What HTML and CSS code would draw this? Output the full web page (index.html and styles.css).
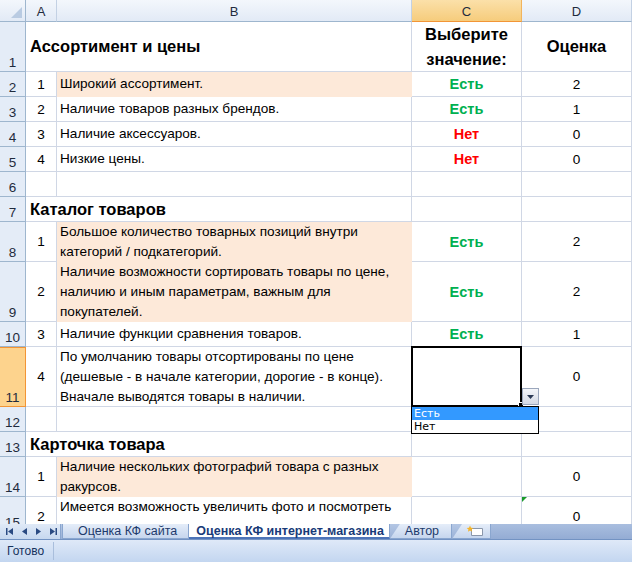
FILE: index.html
```html
<!DOCTYPE html>
<html lang="ru">
<head>
<meta charset="utf-8">
<title>Оценка КФ интернет-магазина</title>
<link rel="stylesheet" href="styles.css">
</head>
<body>
<div class="sheet">
  <div class="grid">
    <div class="ch corner"><span class="tri"></span></div>
    <div class="ch">A</div>
    <div class="ch">B</div>
    <div class="ch ch-sel">C</div>
    <div class="ch">D</div>

    <div class="rh">1</div>
    <div class="c title span2">Ассортимент и цены</div>
    <div class="c head">Выберите<br>значение:</div>
    <div class="c head">Оценка</div>

    <div class="rh">2</div>
    <div class="c num">1</div>
    <div class="c txt peach">Широкий ассортимент.</div>
    <div class="c val yes">Есть</div>
    <div class="c num">2</div>

    <div class="rh">3</div>
    <div class="c num">2</div>
    <div class="c txt">Наличие товаров разных брендов.</div>
    <div class="c val yes">Есть</div>
    <div class="c num">1</div>

    <div class="rh">4</div>
    <div class="c num">3</div>
    <div class="c txt">Наличие аксессуаров.</div>
    <div class="c val no">Нет</div>
    <div class="c num">0</div>

    <div class="rh">5</div>
    <div class="c num">4</div>
    <div class="c txt">Низкие цены.</div>
    <div class="c val no">Нет</div>
    <div class="c num">0</div>

    <div class="rh">6</div>
    <div class="c"></div>
    <div class="c"></div>
    <div class="c"></div>
    <div class="c"></div>

    <div class="rh">7</div>
    <div class="c title span2">Каталог товаров</div>
    <div class="c"></div>
    <div class="c"></div>

    <div class="rh">8</div>
    <div class="c num">1</div>
    <div class="c txt peach">Большое количество товарных позиций внутри<br>категорий / подкатегорий.</div>
    <div class="c val yes">Есть</div>
    <div class="c num">2</div>

    <div class="rh">9</div>
    <div class="c num">2</div>
    <div class="c txt peach">Наличие возможности сортировать товары по цене,<br>наличию и иным параметрам, важным для<br>покупателей.</div>
    <div class="c val yes">Есть</div>
    <div class="c num">2</div>

    <div class="rh">10</div>
    <div class="c num">3</div>
    <div class="c txt">Наличие функции сравнения товаров.</div>
    <div class="c val yes">Есть</div>
    <div class="c num">1</div>

    <div class="rh rh-sel">11</div>
    <div class="c num">4</div>
    <div class="c txt">По умолчанию товары отсортированы по цене<br>(дешевые - в начале категории, дорогие - в конце).<br>Вначале выводятся товары в наличии.</div>
    <div class="c active">
      <div class="selbox"></div>
      <div class="handle"></div>
      <div class="ddbtn"><svg width="7" height="4" viewBox="0 0 7 4"><path d="M0 0h7L3.5 4z" fill="#2b3a55"/></svg></div>
      <ul class="ddlist">
        <li class="hl">Есть</li>
        <li>Нет</li>
      </ul>
    </div>
    <div class="c num">0</div>

    <div class="rh">12</div>
    <div class="c"></div>
    <div class="c"></div>
    <div class="c"></div>
    <div class="c"></div>

    <div class="rh">13</div>
    <div class="c title span2">Карточка товара</div>
    <div class="c"></div>
    <div class="c"></div>

    <div class="rh">14</div>
    <div class="c num">1</div>
    <div class="c txt peach">Наличие нескольких фотографий товара с разных<br>ракурсов.</div>
    <div class="c"></div>
    <div class="c num">0</div>

    <div class="rh rh-last">15</div>
    <div class="c num">2</div>
    <div class="c txt top">Имеется возможность увеличить фото и посмотреть</div>
    <div class="c"></div>
    <div class="c num flag">0</div>
  </div>

  <div class="tabbar">
    <div class="nav">
      <svg width="9" height="9" viewBox="0 0 9 9"><path d="M1 1h1.5v7H1z M8 1v7L3 4.5z" fill="#2a4a82"/></svg>
      <svg width="7" height="9" viewBox="0 0 7 9"><path d="M6 1v7L1 4.5z" fill="#2a4a82"/></svg>
      <svg width="7" height="9" viewBox="0 0 7 9"><path d="M1 1v7l5-3.5z" fill="#2a4a82"/></svg>
      <svg width="9" height="9" viewBox="0 0 9 9"><path d="M1 1v7l5-3.5z M6.5 1H8v7H6.5z" fill="#2a4a82"/></svg>
    </div>
    <div class="tab tab-first">Оценка КФ сайта</div>
    <div class="tab tab-active">Оценка КФ интернет-магазина</div>
    <div class="tab">Автор</div>
    <div class="tab tab-new">
      <svg width="18" height="12" viewBox="0 0 18 12"><path d="M5.5 3.5h11v7h-11z" fill="#fff" stroke="#8a97ab"/><path d="M4 0.5l1 2.2 2.3 0.2-1.8 1.5 0.6 2.3-2.1-1.3-2.1 1.3 0.6-2.3L0.7 2.9 3 2.7z" fill="#f4b328"/></svg>
    </div>
    <div class="tabfill"></div>
  </div>

  <div class="status">
    <span class="ready">Готово</span>
  </div>
</div>
</body>
</html>
```

FILE: styles.css
```css
* { box-sizing: border-box; }

html, body {
  margin: 0;
  padding: 0;
  width: 632px;
  height: 562px;
  overflow: hidden;
  background: #fff;
  font-family: "Liberation Sans", Arial, sans-serif;
}

.sheet {
  width: 632px;
  height: 562px;
  display: flex;
  flex-direction: column;
}

.grid {
  height: 524px;
  overflow: hidden;
  display: grid;
  grid-template-columns: 26px 31px 355px 110px 110px;
  grid-template-rows: 22px 50px 25px 25px 25px 25px 25px 25px 40px 60px 25px 60px 25px 25px 40px 40px;
  flex: none;
}

/* column headers */
.ch {
  background: linear-gradient(#f3f7fc, #e2eaf6);
  border-right: 1px solid #c3d1e4;
  border-bottom: 1px solid #9eb6ce;
  display: flex;
  align-items: center;
  justify-content: center;
  font-size: 13px;
  color: #1f2b3d;
  padding-top: 1px;
}
.corner {
  position: relative;
  border-right-color: #9eb6ce;
}
.tri {
  position: absolute;
  right: 3px;
  bottom: 3px;
  width: 0;
  height: 0;
  border-left: 11px solid transparent;
  border-bottom: 11px solid #b9cbe2;
}
.ch-sel {
  background: linear-gradient(#fbe0a9, #f6cc7c);
  border-bottom-color: #f29536;
  border-right-color: #f2b45c;
}

/* row headers */
.rh {
  background: #e4ecf7;
  border-right: 1px solid #9eb6ce;
  border-bottom: 1px solid #9eb6ce;
  display: flex;
  align-items: flex-end;
  justify-content: center;
  font-size: 13.5px;
  color: #1f2b3d;
  padding-bottom: 1px;
  line-height: 15px;
}
.rh-last {
  align-items: flex-start;
  padding-top: 18px;
}
.rh-sel {
  background: #fdd38d;
  border-right-color: #f29536;
  border-bottom-color: #f29536;
  box-shadow: inset 0 1px 0 #f29536;
}

/* cells */
.c {
  border-right: 1px solid #d0d7e5;
  border-bottom: 1px solid #d0d7e5;
  display: flex;
  align-items: center;
  font-size: 13.6px;
  color: #000;
  white-space: nowrap;
  overflow: visible;
}
.span2 { grid-column: span 2; }

.title {
  font-weight: bold;
  font-size: 16.5px;
  padding-left: 4px;
}
.head {
  font-weight: bold;
  font-size: 16.5px;
  justify-content: center;
  text-align: center;
  line-height: 25px;
}
.num {
  justify-content: center;
}
.txt {
  padding-left: 3px;
  line-height: 20px;
}
.txt.top { align-items: flex-start; }
.peach {
  background: #fde9d9;
  border-right-color: #fde9d9;
  border-bottom-color: #fde9d9;
}
.val {
  justify-content: center;
  font-weight: bold;
  font-size: 14.5px;
}
.yes { color: #00b050; }
.no { color: #ff0000; }

.flag { position: relative; }
.flag::before {
  content: "";
  position: absolute;
  left: 0;
  top: 0;
  border-top: 5px solid #1a9a2a;
  border-right: 5px solid transparent;
}

/* active cell with dropdown */
.active { position: relative; }
.selbox {
  position: absolute;
  left: -1px;
  top: -1px;
  width: 111px;
  height: 61px;
  border: 2px solid #000;
}
.handle {
  position: absolute;
  left: 106px;
  top: 55px;
  width: 6px;
  height: 6px;
  background: #000;
  border: 1px solid #fff;
}
.ddbtn {
  position: absolute;
  left: 110px;
  top: 41px;
  width: 17px;
  height: 17px;
  background: linear-gradient(#f4f6fa, #d3d9e4);
  border: 1px solid #9ba7bc;
  display: flex;
  align-items: center;
  justify-content: center;
  z-index: 2;
}
.ddlist {
  position: absolute;
  left: -1px;
  top: 59px;
  width: 128px;
  height: 28px;
  margin: 0;
  padding: 0;
  list-style: none;
  background: #fff;
  border: 1px solid #000;
  z-index: 3;
  font-size: 11px;
  font-family: "DejaVu Sans", "Liberation Sans", sans-serif;
}
.ddlist li {
  height: 13px;
  line-height: 13px;
  padding-left: 2px;
  color: #000;
}
.ddlist li.hl {
  background: #3399ff;
  color: #fff;
}

/* sheet tabs */
.tabbar {
  height: 16px;
  flex: none;
  display: flex;
  align-items: stretch;
  background: linear-gradient(#b3c6e4, #9bb2d7);
  border-bottom: 1px solid #7393c3;
  font-size: 12.5px;
}
.nav {
  width: 61px;
  display: flex;
  align-items: center;
  gap: 7px;
  padding-left: 5px;
  background: linear-gradient(#dfe9f7, #c7d8ef);
  border-right: 1px solid #8aa6cf;
}
.tab {
  position: relative;
  padding: 0 12px 0 15px;
  display: flex;
  align-items: center;
  color: #1d3a6c;
  background: linear-gradient(#e5edf9, #c6d6ee);
  border-right: 1px solid #8aa6cf;
  border-bottom: 1px solid #8aa6cf;
  line-height: 14px;
  clip-path: polygon(0 100%, 10px 0, 100% 0, 100% 100%);
}
.tab-first {
  clip-path: none;
  margin-left: 1px;
  padding-left: 15px;
  padding-right: 11px;
  border-left: 1px solid #8aa6cf;
}
.tab-active {
  background: #fff;
  font-weight: bold;
  color: #183a78;
  border-bottom: 2px solid #4d74b8;
  padding: 0 5px 0 7px;
  clip-path: none;
}
.tab-new {
  padding: 0 6px 0 14px;
}
.tabfill {
  flex: 1;
  background: linear-gradient(#a9bedf, #94acd4);
}

/* status bar */
.status {
  flex: 1;
  background: linear-gradient(#dfe9f8, #c3d6f0);
  display: flex;
  align-items: center;
  font-size: 12px;
  color: #15325c;
}
.ready {
  width: 54px;
  padding-left: 7px;
  border-right: 1px solid #a9bedc;
  line-height: 18px;
}
```
